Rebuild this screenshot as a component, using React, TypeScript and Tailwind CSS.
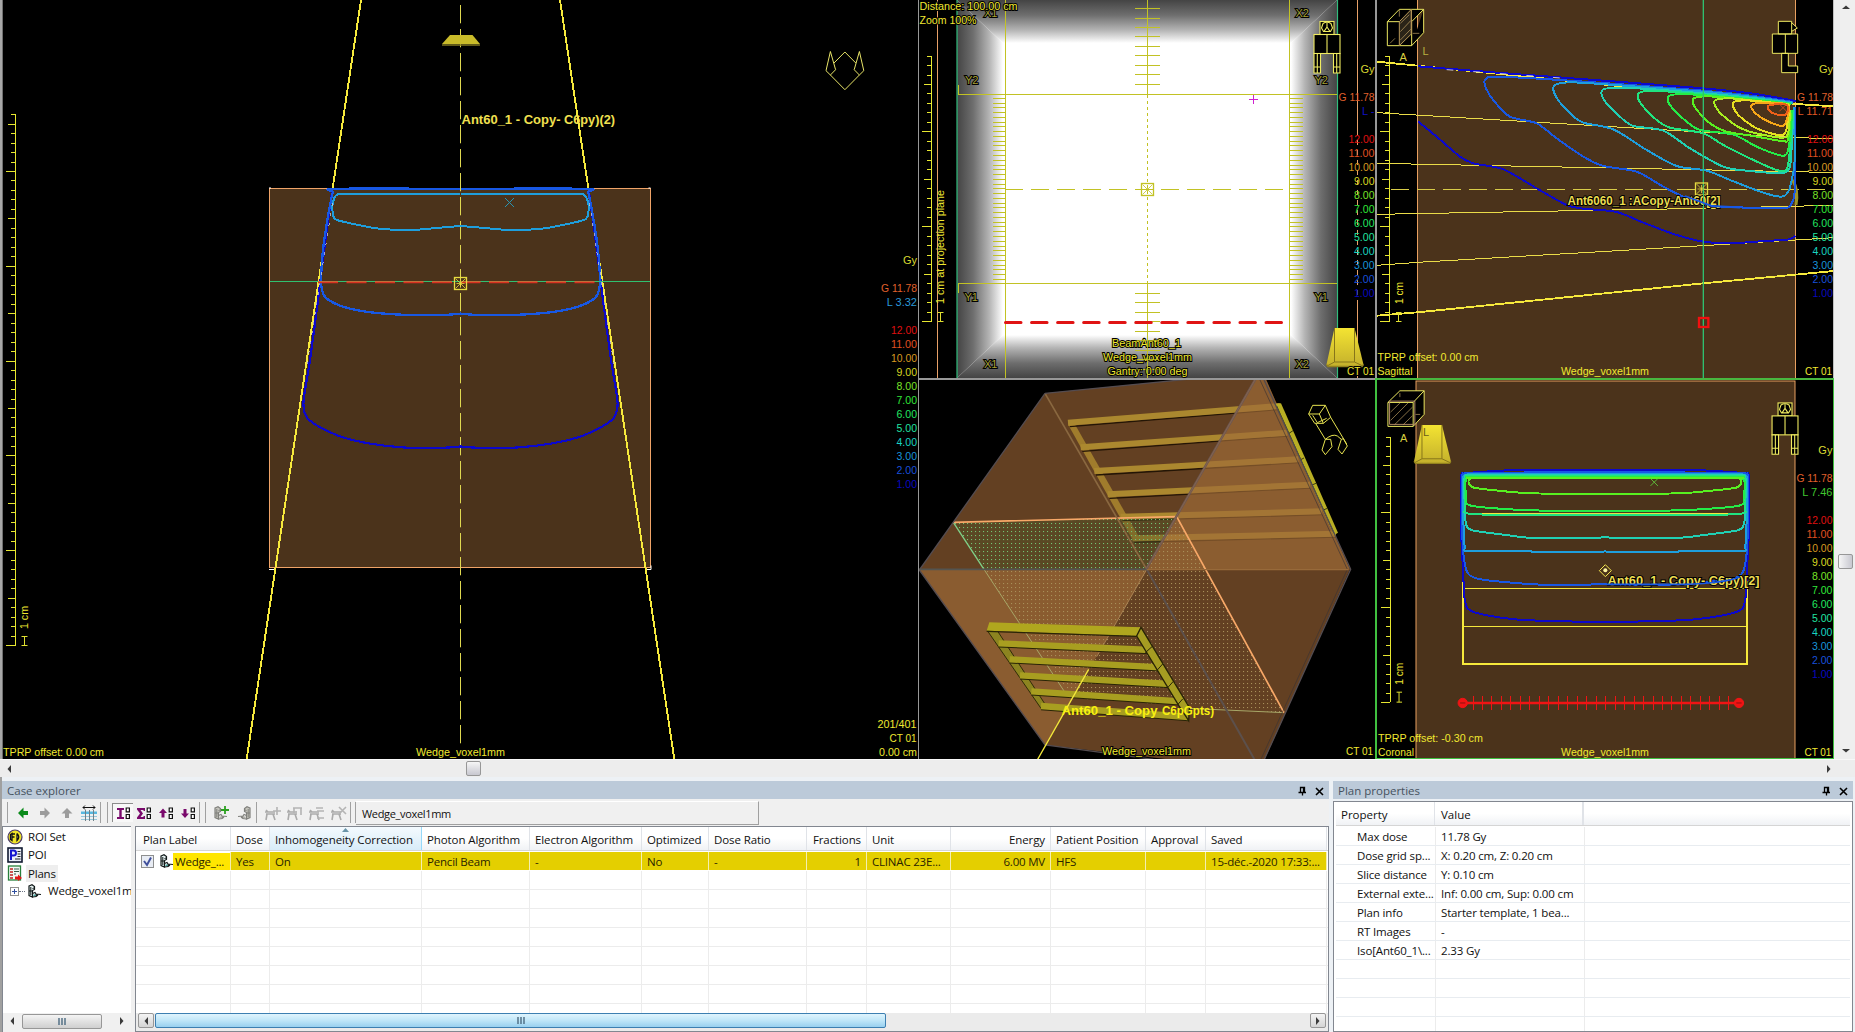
import React from "react";

type Pt = [number, number];

/* Catmull-Rom spline through the given points */
function curve(p: Pt[], close = false): string {
  const n = p.length;
  const at = (i: number): Pt => (close ? p[(i + n) % n] : p[Math.max(0, Math.min(n - 1, i))]);
  let d = `M${p[0][0]} ${p[0][1]}`;
  const segs = close ? n : n - 1;
  for (let i = 0; i < segs; i++) {
    const [a, b, c, e] = [at(i - 1), at(i), at(i + 1), at(i + 2)];
    const k = 7;
    d += `C${b[0] + (c[0] - a[0]) / k} ${b[1] + (c[1] - a[1]) / k} ${c[0] - (e[0] - b[0]) / k} ${c[1] - (e[1] - b[1]) / k} ${c[0]} ${c[1]}`;
  }
  return close ? d + "Z" : d;
}

/* Mirrors a half contour (centre last) about a vertical axis */
function mirror(p: Pt[], cx: number): Pt[] {
  return [...p, ...p.slice().reverse().map(([x, y]): Pt => [2 * cx - x, y])];
}

const DOSE = {
  1: "#0c08cc",
  2: "#1858e4",
  3: "#1e9edc",
  4: "#20d0b4",
  5: "#20e480",
  6: "#24ec48",
  7: "#58f020",
  8: "#a8f020",
  9: "#e8e020",
  10: "#f8a818",
  11: "#f06018",
} as const;

const LEGEND: [string, string][] = [
  ["12.00", "#e01010"],
  ["11.00", "#e05020"],
  ["10.00", "#d89a20"],
  ["9.00", "#d8d820"],
  ["8.00", "#78e428"],
  ["7.00", "#30e838"],
  ["6.00", "#20e860"],
  ["5.00", "#20e4a0"],
  ["4.00", "#18d4c0"],
  ["3.00", "#1894dc"],
  ["2.00", "#1850dc"],
  ["1.00", "#0808c0"],
];

function T({
  x,
  y,
  w,
  children,
  fill = "#f0e830",
  end,
  bold,
  size = 11,
  outline,
  rot,
}: {
  x: number;
  y: number;
  w?: number;
  children: string;
  fill?: string;
  end?: boolean;
  bold?: boolean;
  size?: number;
  outline?: boolean;
  rot?: boolean;
}) {
  return (
    <text
      x={x}
      y={y}
      fill={fill}
      fontSize={size}
      textLength={w}
      lengthAdjust="spacingAndGlyphs"
      textAnchor={end ? "end" : "start"}
      fontWeight={bold ? 700 : 400}
      stroke={outline ? "#000" : "none"}
      strokeWidth={outline ? 2 : 0}
      paintOrder="stroke"
      transform={rot ? `rotate(-90 ${x} ${y})` : undefined}
    >
      {children}
    </text>
  );
}

function Legend({ x, y, local, localColor }: { x: number; y: number; local: string; localColor: string }) {
  return (
    <g>
      <T x={x} y={y} end fill="#d8d830" size={11}>Gy</T>
      <T x={x} y={y + 28} end w={36} fill="#e0602c" size={11}>G 11.78</T>
      <T x={x} y={y + 42} end fill={localColor} size={11}>{local}</T>
      {LEGEND.map(([v, c], i) => (
        <T key={v} x={x} y={y + 70 + i * 14} end w={v.length === 5 ? 26 : 20.5} fill={c} size={11}>{v}</T>
      ))}
    </g>
  );
}

function Ruler({ x, bottom, count }: { x: number; bottom: number; count: number }) {
  const step = 9.48;
  let d = `M${x} ${bottom}V${bottom - step * count}`;
  for (let i = 0; i <= count; i++) {
    const len = i % 10 === 0 ? 9.5 : i % 5 === 0 ? 7.5 : 4.5;
    d += `M${x} ${Math.round(bottom - i * step) + 0.5}h${-len}`;
  }
  return <path d={d} stroke="#e8e830" fill="none" shapeRendering="crispEdges" />;
}

function UnitMark({ x, y }: { x: number; y: number }) {
  return <path d={`M${x - 2.5} ${y}.5h6M${x - 2.5} ${y + 9}.5h6M${x + 0.5} ${y}.5v9`} stroke="#e0e030" fill="none" />;
}

function IsoBox({ x, y, c = "#e8dc40" }: { x: number; y: number; c?: string }) {
  return (
    <g stroke={c} fill="none">
      <rect x={x - 6} y={y - 6} width="12" height="12" strokeWidth="1.3" />
      <path d={`M${x - 5} ${y - 5}l10 10m0 -10l-10 10M${x} ${y - 4}v8M${x - 4} ${y}h8`} strokeWidth=".8" />
    </g>
  );
}

function FrontFigure({ x, y }: { x: number; y: number }) {
  return (
    <g transform={`translate(${x} ${y})`} stroke="#f0ec60" fill="#000" strokeWidth="1.1">
      <rect x="6.5" y=".5" width="14" height="13" />
      <path d="M9.500 2.500Q13.500 0 17.500 2.500L19 7L17 10.500H10L8 7ZM13.500 2v4l-3 4.500M13.500 6l3 4.500" />
      <rect x=".5" y="13.500" width="26" height="19" />
      <path d="M13.500 13.500v19" />
      <path d="M.5 32.500h6.500v19.500h-6.500zM20 32.500h6.500v19.500h-6.500zM3.800 32.500v19.500M23.200 32.500v19.500M.5 46h6.500M20 46h6.500" />
    </g>
  );
}

function WedgeBlock({ x, y }: { x: number; y: number }) {
  return (
    <g transform={`translate(${x} ${y})`}>
      <path d="M8.500 0H28.500L37.500 36.500L36 38.500H2L.5 36.500Z" fill="url(#brass)" />
      <path d="M8.500 0V34M28.500 0V34M8.500 34H28.500M8.500 34L1 38M28.500 34L37 38" stroke="#87751a" fill="none" />
      <path d="M.5 36.500L2 38.500H36l1.500 -2" stroke="#93821e" fill="none" strokeWidth="1.3" />
    </g>
  );
}

function BrassGradient() {
  return (
    <defs>
      <linearGradient id="brass" x1="0" y1="0" x2="0" y2="1">
        <stop offset="0" stopColor="#f4e432" />
        <stop offset="1" stopColor="#c4b02c" />
      </linearGradient>
    </defs>
  );
}

const viewClass = "block size-full";
const viewFont = { fontFamily: '"Liberation Sans", Arial, sans-serif' };

function AxialView() {
  const c1: Pt[] = [[588.6, 190], [595, 235], [603, 300], [611, 360], [616, 390], [617.6, 403], [616.5, 412], [613, 419], [601.5, 427], [579, 437], [551.5, 443.5], [517, 447.5], [479, 447.8], [461, 446.5]];
  const c2: Pt[] = [[461, 188.8], [585, 188.8], [588, 192], [590, 200], [594.6, 226], [598, 250], [600, 280], [598.7, 291], [595, 298], [582.5, 305], [565, 310], [544.6, 313], [517, 314.8], [479, 315], [461, 313.7]];
  const c3: Pt[] = [[461, 193.8], [571, 193.8], [584, 195], [587, 199], [588.6, 206], [587.7, 216], [584, 220], [565, 224.5], [541, 228.8], [510, 230], [479, 227.5], [461, 226]];
  return (
    <svg viewBox="3 0 915 759" className={viewClass} style={viewFont}>
      <rect x="269.500" y="188.500" width="381" height="379" fill="#4b331b" stroke="#f0a468" />
      <path d="M269 569.500h5M646 569.500h5v-4M269 188h2M648.500 188h2" stroke="#fff" fill="none" />
      <path d="M460.500 5V745" stroke="#dfd850" strokeDasharray="18.300 5.700" />
      <g shapeRendering="crispEdges">
        <path d="M361 0L246.700 759M560 0L674.300 759" stroke="#f6e93c" strokeWidth="1.900" />
        <path d={curve(mirror(c1, 460.5))} stroke={DOSE[1]} fill="none" strokeWidth="2.200" />
        <path d={curve(mirror(c2, 460.5))} stroke={DOSE[2]} fill="none" strokeWidth="2.300" />
        <path d={curve(mirror(c3, 460.5))} stroke={DOSE[3]} fill="none" strokeWidth="2" />
        <path d="M332.500 203L307 365M589.500 203L614 365" stroke="#d8d8f0" strokeDasharray="3 7" opacity=".7" />
      </g>
      <path d="M450 35h22.500l7.500 9h-38z" fill="#c9bb2a" />
      <path d="M442 45h38" stroke="#7e7420" strokeWidth="1.600" />
      <path d="M270 281.500H650" stroke="#30c070" shapeRendering="crispEdges" />
      <path d="M318 282.500H600" stroke="#d83020" strokeWidth="1.400" strokeDasharray="20 8.500" />
      <path d="M318 281.500H600" stroke="#c07038" strokeDasharray="20 8.500" />
      <IsoBox x={460.5} y={283.500} />
      <path d="M505 198l9 9m0 -9l-9 9" stroke="#2a94b0" />
      <path
        d="M844.900 52L834 63M844.900 52L855.800 63M830.400 75L844.900 89.700L859.400 75M830.400 51.500L826 70.700L830.400 75L835.600 69.700Zm29 0L863.800 70.700L859.400 75L854.200 69.700Z"
        stroke="#e8e468"
        fill="none"
      />
      <Ruler x={15.5} bottom={645} count={56} />
      <path d="M21.500 636.500h6M21.500 645.500h6M24.500 636.500v9" stroke="#e0e030" />
      <T x={28} y={629} w={23} rot>1 cm</T>
      <T x={461.5} y={124} w={99} bold size={12.5} fill="#f0e050">Ant60_1 - Copy-</T>
      <T x={564} y={124} w={51} bold size={12.5} fill="#f0e050">C6py)(2)</T>
      <Legend x={917} y={264} local="L 3.32" localColor="#2a98d8" />
      <T x={3} y={756} w={101}>TPRP offset: 0.00 cm</T>
      <T x={416} y={756} w={89}>Wedge_voxel1mm</T>
      <T x={916.500} y={728} end w={39}>201/401</T>
      <T x={916.500} y={742} end w={27}>CT 01</T>
      <T x={917} y={756} end w={38}>0.00 cm</T>
    </svg>
  );
}

function BeamEyeView() {
  const side = Array.from({ length: 39 }, (_, i) => 98.3 + i * 4.765);
  const mid = [...Array.from({ length: 9 }, (_, i) => 84.3 - i * 9.47), ...Array.from({ length: 9 }, (_, i) => 293.3 + i * 9.47)];
  const corner: [string, number, number][] = [
    ["X1", 984, 17], ["X2", 1295.500, 17], ["Y2", 965, 84], ["Y2", 1314.5, 84],
    ["Y1", 964.500, 301], ["Y1", 1314.5, 301], ["X1", 984, 367.500], ["X2", 1295.500, 367.500],
  ];
  const g = [["0", "#444444"], [".35", "#6e6e6e"], [".7", "#b4b4b4"], ["1", "#fff"]];
  const ramp = (id: string, x1: number, y1: number, x2: number, y2: number) => (
    <linearGradient id={id} x1={x1} y1={y1} x2={x2} y2={y2}>
      {g.map(([o, c]) => <stop key={o} offset={o} stopColor={c} />)}
    </linearGradient>
  );
  return (
    <svg viewBox="919 0 456 378" className={viewClass} style={viewFont}>
      <BrassGradient />
      <defs>
        {ramp("rl", 0, 0, 1, 0)}
        {ramp("rr", 1, 0, 0, 0)}
        {ramp("rt", 0, 0, 0, 1)}
        {ramp("rb", 0, 1, 0, 0)}
      </defs>
      <rect x="957" y="0" width="380" height="378" fill="#fff" />
      <path d="M957 0L1003 43V335L957 378Z" fill="url(#rl)" />
      <path d="M1337 0L1291 43V335L1337 378Z" fill="url(#rr)" />
      <path d="M957 0H1337L1291 43H1003Z" fill="url(#rt)" />
      <path d="M957 378H1337L1291 335H1003Z" fill="url(#rb)" />
      <path d="M957 0V378M1337.500 0V378" stroke="#30bc7c" strokeWidth="1.200" />
      <path d="M937.500 0V378" stroke="#e8a068" />
      <path d="M1357.500 0V130M1357.500 300V378" stroke="#e8a068" />
      <path d="M1357.500 130V300" stroke="#e8a068" strokeDasharray="5 5" />
      <g stroke="#c2c224" fill="none" shapeRendering="crispEdges">
        <path d="M1005.500 0V378M1289.500 0V378M958.500 85V94.500H1337M958.500 293V283.500H1337M1147.500 0V94M1147.500 284V378" />
        <path d="M1147.500 95V283" strokeDasharray="3 3" />
        <path d="M1005 189.500H1288" strokeDasharray="18 8" />
        <path d={side.map((y) => `M993 ${y}h12M1290 ${y}h12.5`).join("")} />
        <path d={mid.map((y) => `M1135 ${y}h25`).join("")} />
      </g>
      <IsoBox x={1147.500} y={189.500} c="#c2c224" />
      <path d="M1005.500 322.500H1282" stroke="#e01414" strokeWidth="3" strokeLinecap="round" strokeDasharray="15.500 10.550" />
      <path d="M1249 99.500h9M1253.500 95v9" stroke="#d020d0" />
      <FrontFigure x={1313.5} y={21} />
      <WedgeBlock x={1326} y={328} />
      {corner.map(([s, x, y]) => (
        <T key={s + x + y} x={x} y={y} size={11} w={13.5} outline fill="#a8a034">{s}</T>
      ))}
      <Ruler x={931.5} bottom={321} count={28} />
      <path d="M937.500 312.500h6M937.500 321.500h6M940.500 312.500v9" stroke="#e0e030" />
      <T x={944} y={304} w={114} rot>1 cm at projection plane</T>
      <T x={919.500} y={10} w={98} outline>Distance: 100.00 cm</T>
      <T x={919.500} y={24} w={57} outline>Zoom 100%</T>
      <T x={1112} y={347} w={69} outline>BeamAnt60_1</T>
      <T x={1103} y={361} w={89} outline>Wedge_voxel1mm</T>
      <T x={1107.500} y={375} w={80} outline>Gantry: 0.00 deg</T>
      <path d="M1147.500 338V378M1137 340.500h21M1137 350.500h21M1137 359.500h21" stroke="#c2c224" strokeWidth=".8" />
      <Legend x={1374.500} y={73} local="L  -" localColor="#1010c8" />
      <T x={1374} y={375} end w={27} outline>CT 01</T>
    </svg>
  );
}

function SagittalView() {
  const contours: [string, Pt[]][] = [
    [DOSE[1], [[145, 199], [420, 221], [700, 242], [1000, 265], [1150, 281], [1277, 303]]],
    [DOSE[1], [[145, 365], [200, 410], [270, 470], [310, 490], [400, 508], [500, 565], [590, 615], [640, 626], [740, 636], [820, 668], [920, 705], [1000, 725], [1080, 730], [1200, 722], [1250, 720], [1277, 708]]],
    [DOSE[2], [[1270, 306], [1150, 288], [1000, 272], [700, 249], [540, 238], [375, 230], [345, 240], [348, 265], [372, 303], [420, 350], [500, 370], [560, 415], [640, 470], [700, 498], [800, 515], [880, 560], [960, 600], [1020, 617], [1100, 622], [1240, 624], [1264, 612], [1275, 560], [1274, 320]]],
    [DOSE[3], [[1268, 308], [1150, 291], [1000, 275], [720, 254], [600, 247], [553, 257], [558, 290], [600, 340], [640, 368], [730, 388], [830, 450], [920, 498], [1010, 512], [1080, 540], [1180, 578], [1235, 590], [1255, 575], [1265, 540], [1274, 480], [1272, 320]]],
    [DOSE[4], [[1266, 310], [1150, 294], [1000, 280], [850, 268], [750, 263], [698, 269], [702, 300], [750, 350], [790, 378], [880, 392], [960, 445], [1060, 500], [1130, 512], [1230, 519], [1257, 508], [1264, 460], [1270, 330]]],
    [DOSE[5], [[1264, 311], [1150, 297], [1000, 283], [850, 272], [806, 280], [812, 310], [860, 360], [900, 383], [1000, 400], [1060, 435], [1150, 480], [1220, 510], [1250, 508], [1260, 450], [1268, 330]]],
    [DOSE[6], [[1262, 312], [1150, 299], [1030, 288], [935, 282], [895, 290], [902, 318], [950, 365], [990, 390], [1090, 404], [1160, 440], [1230, 466], [1252, 458], [1262, 400], [1266, 330]]],
    [DOSE[7], [[1260, 312], [1150, 301], [1080, 294], [1010, 289], [970, 296], [977, 325], [1020, 370], [1070, 395], [1150, 408], [1240, 424], [1255, 415], [1263, 340]]],
    [DOSE[8], [[1260, 314], [1150, 302], [1080, 295], [1034, 302], [1047, 335], [1100, 378], [1150, 398], [1235, 413], [1254, 400], [1261, 330]]],
    [DOSE[9], [[1256, 314], [1180, 305], [1120, 301], [1088, 310], [1105, 345], [1160, 385], [1225, 405], [1247, 395], [1257, 335], [1256, 314]]],
    [DOSE[10], [[1240, 309], [1170, 308], [1143, 318], [1160, 343], [1200, 367], [1240, 377], [1253, 350], [1257, 322], [1240, 309]]],
    [DOSE[11], [[1245, 313], [1215, 313], [1193, 320], [1205, 338], [1240, 346], [1254, 332], [1252, 317], [1245, 313]]],
  ];
  return (
    <svg viewBox="1377 0 456 378" className={viewClass} style={viewFont}>
      <rect x="1417.500" y="-1" width="378" height="380" fill="#4b331b" stroke="#e8a060" />
      <g transform="translate(1370 0) scale(.33333)" fill="none" strokeWidth="3">
        <g stroke="#f6e93c" shapeRendering="crispEdges">
          <path d="M21 185L143 197L1277 312L1392 319M21 947L143 937L1000 850L1392 813" strokeWidth="5.500" />
          <path d="M21 338L1277 413L1392 416M21 490L1277 515L1392 518M21 643L1000 625L1392 616M21 796L143 787L1000 737L1277 720L1392 713" stroke="#eadc48" strokeWidth="3" />
          <path d="M64 568H1392" strokeDasharray="54 24" stroke="#d8cc48" />
        </g>
        <path d="M1268 540q18 30 10 75" stroke="#9a9428" strokeWidth="9" />
        <g shapeRendering="crispEdges">
          {contours.map(([c, p], i) => <path key={i} d={curve(p)} stroke={c} strokeWidth="6" />)}
        </g>
        <path d="M230 209L600 236" stroke="#e8e8f0" strokeDasharray="20 60" strokeWidth="2.500" />
        <path d="M1000 0V1134" stroke="#30c070" strokeWidth="4" />
        <path d="M1228 312l22 22m0 -22l-22 22" stroke="#c85020" />
        <rect x="987" y="954" width="28" height="27" stroke="#f01010" strokeWidth="7" />
        <g stroke="#ece860">
          <path d="M52 65H125V137H52ZM52 65L88 28H161L125 65M161 28V98L125 137" fill="#000" />
          <path d="M88 65L124 28V100M124 28V102L88 137V65" stroke="#b89858" fill="#2a2418" />
          <path d="M91 95L122 62M91 120L122 88M91 70L118 44M60 130l15 -15M128 100h20M88 30v20" stroke="#c8a868" strokeWidth="2" />
          <path d="M1225 64h40v38h-40zM1265 68l17 16l-17 10M1207 102h76v58h-76zM1246 102v58M1235 160h20v38h28v20h-48z" fill="#000" />
        </g>
      </g>
      <IsoBox x={1701.500} y={189} />
      <T x={1399.500} y={61} fill="#d8d040">A</T>
      <T x={1422.500} y={54.500} fill="#b8b040">L</T>
      <Ruler x={1389.5} bottom={321} count={28} />
      <path d="M1396 312.500h5.500M1396 321.500h5.500M1398.500 312.500v9" stroke="#e0e030" />
      <T x={1402.500} y={304} w={22} rot>1 cm</T>
      <T x={1567.500} y={204.500} w={153} size={12.5} bold outline fill="#ecdc50">Ant6060_1 :ACopy-Ant60[2]</T>
      <path d="M1703.500 190V215" stroke="#30c070" />
      <path d="M1685 196L1712 206L1740 207.500" stroke={DOSE[2]} fill="none" strokeWidth="1.800" />
      <T x={1377.500} y={361} w={101}>TPRP offset: 0.00 cm</T>
      <T x={1377.500} y={375} w={35}>Sagittal</T>
      <T x={1561} y={375} w={88}>Wedge_voxel1mm</T>
      <T x={1832} y={375} end w={27}>CT 01</T>
      <Legend x={1833} y={73} local="L 11.71" localColor="#e05824" />
    </svg>
  );
}

function CoronalView() {
  const m = (p: Pt[]) => mirror(p, 705);
  const contours: [string, Pt[]][] = [
    [DOSE[1], [[705, 299], [955, 299], [1080, 305], [1125, 310], [1138, 322], [1138, 480], [1132, 600], [1128, 680], [1118, 716], [1080, 732], [980, 748], [860, 754], [705, 756]]],
    [DOSE[2], [[705, 305], [1090, 308], [1126, 312], [1135, 325], [1134, 500], [1128, 575], [1116, 612], [1080, 628], [950, 641], [860, 645], [705, 643]]],
    [DOSE[3], [[705, 310], [1090, 312], [1124, 316], [1132, 328], [1131, 450], [1127, 530], [1118, 543], [1000, 543], [930, 543], [910, 546], [745, 546], [705, 544]]],
    [DOSE[4], [[705, 313], [1090, 315], [1122, 318], [1129, 330], [1127, 400], [1124, 455], [1106, 480], [1000, 495], [930, 503], [750, 504], [705, 501]]],
    [DOSE[5], [[705, 316], [1090, 317], [1118, 320], [1127, 332], [1126, 410], [1118, 430], [1000, 435], [860, 435], [705, 435]]],
    [DOSE[6], [[705, 319], [1090, 320], [1116, 322], [1125, 335], [1122, 385], [1110, 406], [1000, 417], [860, 422], [705, 422]]],
    [DOSE[7], [[705, 324], [1090, 324], [1110, 326], [1115, 338], [1100, 352], [1040, 360], [940, 369], [860, 370], [705, 370]]],
  ];
  const ticks = Array.from({ length: 28 }, (_, i) => `M${308 + i * 28.5} 980v42`).join("");
  return (
    <svg viewBox="1377 379.500 456 379.500" className={viewClass} style={viewFont}>
      <BrassGradient />
      <rect x="1415.500" y="380.500" width="380" height="385" fill="#4b331b" stroke="#e8a060" />
      <g transform="translate(1370 370) scale(.33333)" fill="none" strokeWidth="3">
        <g stroke="#f6e93c" shapeRendering="crispEdges">
          <path d="M279 310V883H1132V310" strokeWidth="5.500" />
          <path d="M279 430H1132M279 543H1132M279 655H1132M279 769H1132" strokeWidth="3" />
        </g>
        <g shapeRendering="crispEdges">
          {contours.map(([c, p], i) => <path key={i} d={curve(m(p), true)} stroke={c} strokeWidth="6" />)}
        </g>
        <path d="M415 430H1000" stroke="#e8e448" />
        <path d="M842 325l22 22m0 -22l-22 22" stroke="#60b838" />
        <path d="M706 584L724 602L706 620L688 602Z" stroke="#f4e850" />
        <circle cx="706" cy="601" r="6" fill="#fff8a0" />
        <g stroke="#f01414">
          <path d="M278 1000H1108" strokeWidth="7" />
          <path d={ticks} shapeRendering="crispEdges" />
          <circle cx="277" cy="1000" r="14" fill="#f01414" />
          <circle cx="1108" cy="1000" r="14" fill="#f01414" />
          <path d="M269 1000h16M1100 1000h16" stroke="#901010" />
        </g>
        <g stroke="#ece860">
          <path d="M52 96L88 61H161V132L128 168M52 96H128V168H52ZM128 96L161 61" fill="#000" />
          <path d="M57 92h76v70h-76z" stroke="#b08868" />
          <path d="M60 150L112 98M60 125L88 98M72 163L126 110M98 163L126 136M88 68v12M135 132h14" stroke="#c8a868" strokeWidth="2" />
        </g>
      </g>
      <WedgeBlock x={1413} y={424.500} />
      <FrontFigure x={1772} y={402} />
      <T x={1399.500} y={442} fill="#d8d040">A</T>
      <T x={1422.500} y={436} fill="#6c5c18">L</T>
      <Ruler x={1389.5} bottom={702} count={28} />
      <path d="M1396 692.500h5.500M1396 702.500h5.500M1398.500 692.500v10" stroke="#e0e030" />
      <T x={1402.500} y={685} w={22} rot>1 cm</T>
      <T x={1607.500} y={585} w={98} size={12.5} bold outline fill="#ecdc50">Ant60_1 - Copy-</T>
      <T x={1709} y={585} w={51} size={12.5} bold outline fill="#ecdc50">C6py)[2]</T>
      <path d="M1606 584.500H1685Q1725 583 1740 577" stroke={DOSE[2]} fill="none" strokeWidth="1.800" />
      <T x={1377.500} y={742} w={105}>TPRP offset: -0.30 cm</T>
      <T x={1377.500} y={756} w={36}>Coronal</T>
      <T x={1561} y={756} w={88}>Wedge_voxel1mm</T>
      <T x={1832} y={756} end w={27}>CT 01</T>
      <Legend x={1833} y={454} local="L 7.46" localColor="#40c830" />
    </svg>
  );
}

function VolumeView() {
  const upper: [Pt, Pt][] = [
    [[474, 158], [1110, 108]],
    [[512, 232], [1132, 188]],
    [[553, 303], [1165, 268]],
    [[593, 373], [1200, 344]],
    [[632, 440], [1236, 424]],
    [[668, 505], [1278, 491]],
  ];
  const lower: [Pt, Pt][] = [
    [[266, 820], [722, 840]],
    [[299, 868], [752, 892]],
    [[330, 916], [782, 942]],
    [[364, 964], [812, 994]],
    [[393, 1008], [836, 1041]],
  ];
  return (
    <svg viewBox="919 380 456 379" className={viewClass} style={viewFont}>
      <defs>
        <pattern id="dotsGreen" width="12" height="12" patternUnits="userSpaceOnUse">
          <rect x="3" y="3" width="3.200" height="3.200" fill="#74c474" />
        </pattern>
        <pattern id="dotsTan" width="12" height="12" patternUnits="userSpaceOnUse">
          <rect x="3" y="3" width="3.200" height="3.200" fill="#a8905a" />
        </pattern>
      </defs>
      <g transform="translate(910 370) scale(.33333)" fill="none" strokeWidth="3">
        <path d="M405 70L830 28L1060 10L1320 598L1050 1200L405 1125L28 600Z" fill="#634022" />
        <path d="M475 165L496 165L692 510H668Z" fill="#a07c2c" />
        {upper.map(([a, b], i) => (
          <g key={i}>
            <path d={`M${a[0] + 5} ${a[1] + 12}L${b[0]} ${b[1] + 10}`} stroke="#231505" strokeWidth="4" />
            <path d={`M${a[0]} ${a[1]}L${b[0]} ${b[1]}`} stroke="#ab882f" strokeWidth="18" />
          </g>
        ))}
        <path d="M1043 10H1060L1320 598H710Z" fill="#a06c38" fillOpacity=".66" />
        <path d="M1095 102L1113 100L1284 488L1272 496Z" fill="#b8ae24" />
        <path d="M1100 108L1272 490" stroke="#3c3810" />
        <path d="M1137 190l12 -8M1170 270l12 -6M1206 345l12 -5M1240 420l12 -5" stroke="#3c3810" />
        <path d="M28 600H710L405 1125Z" fill="#8a5c30" />
        <path d="M130 457L800 440L710 598H222Z" fill="#4e5428" fillOpacity=".4" />
        <path d="M130 457L800 440L710 598H222Z" fill="url(#dotsGreen)" />
        <path d="M222 598H710L800 440L1122 1028L490 985Z" fill="url(#dotsTan)" />
        <path d="M130 457L222 598" stroke="#80d088" strokeWidth="4" />
        <path d="M222 598L470 975M835 1015L1122 1028" stroke="#a8a868" strokeWidth="3" />
        <path d="M130 457L800 440L1122 1028" stroke="#f8a868" strokeWidth="5" />
        <path d="M405 70L710 598" stroke="#8a6840" strokeWidth="5" />
        <path d="M710 598L560 860" stroke="#a88050" strokeWidth="3" />
        <path d="M405 70L830 28M405 70L28 600L405 1125L730 1168M1060 25L1322 598L1062 1170" stroke="#544c50" strokeWidth="4" />
        <path d="M1050 30L1312 598L1052 1170" stroke="#3c3434" strokeWidth="2" />
        <path d="M1036 28L708 598" stroke="#6a5654" strokeWidth="7" />
        <path d="M1036 28L708 598" stroke="#8c6648" strokeWidth="2.500" />
        <path d="M710 598L1040 1180" stroke="#5c504c" strokeWidth="6" />
        <path d="M28 598H710" stroke="#545450" strokeWidth="5" />
        <path d="M710 599H1316" stroke="#986a3a" strokeWidth="4" />
        <path d="M232 782L262 782L410 1010L395 1018Z" fill="#8c8420" stroke="#302c08" />
        {lower.map(([a, b], i) => (
          <g key={i}>
            <path d={`M${a[0]} ${a[1] + 10}L${b[0]} ${b[1] + 10}`} stroke="#282406" strokeWidth="5" />
            <path d={`M${a[0]} ${a[1]}L${b[0]} ${b[1]}`} stroke="#a89e20" strokeWidth="19" />
          </g>
        ))}
        <path d="M238 757L692 772L680 798L230 782Z" fill="#b0a61e" />
        <path d="M230 784L680 799" stroke="#282406" strokeWidth="4" />
        <path d="M693 772L680 798L806 1006L836 1052L838 1012Z" fill="#a69c22" stroke="#282406" strokeWidth="4" />
        <path d="M706 848l20 -18M742 900l16 -18M774 952l16 -18M804 1003l14 -16" stroke="#282406" />
        <path d="M536 898L383 1168" stroke="#f4e83c" strokeWidth="4" />
        <g stroke="#e8e450" strokeWidth="3">
          <path d="M1208 106H1246L1262 142L1240 160H1214L1196 132ZM1196 132L1228 132L1246 106M1228 132L1240 160M1208 136L1222 158L1250 145" />
          <path d="M1262 142L1310 222M1218 162L1246 208M1246 208Q1268 190 1282 198L1294 208M1246 208L1236 240L1246 254L1266 230L1262 208ZM1294 208L1284 238L1296 252L1312 228L1300 206Z" />
        </g>
      </g>
      <T x={1061.500} y={715} w={96} size={12.5} bold fill="#f8f010">Ant60_1 - Copy</T>
      <T x={1162} y={715} w={52} size={12.5} bold fill="#f8f010">C6pGpts)</T>
      <T x={1102} y={755} w={89} outline>Wedge_voxel1mm</T>
      <T x={1373} y={755} end w={27}>CT 01</T>
    </svg>
  );
}

/* ---------- window chrome ---------- */

function Arrow({ dir }: { dir: "left" | "right" | "up" | "down" }) {
  const d = { left: "M6 0L2.500 4L6 8Z", right: "M2 0L5.500 4L2 8Z", up: "M0 6L4 2.500L8 6Z", down: "M0 2L4 5.500L8 2Z" }[dir];
  return (
    <svg width="8" height="8" className="shrink-0">
      <path d={d} fill="#3a3a3a" />
    </svg>
  );
}

function Grip() {
  return (
    <svg width="8" height="7">
      <path d="M1 0v7M4 0v7M7 0v7" stroke="#4a6a80" strokeWidth="1.400" />
    </svg>
  );
}

function PaneTitle({ children }: { children: string }) {
  return (
    <div className="flex h-[18px] shrink-0 items-center bg-[#bccad9] pt-[2px] pr-[5px] pl-[5px] text-[#46525e]">
      <span className="flex-1">{children}</span>
      <svg width="9" height="10" className="mr-[8px]">
        <path d="M2.500 6V1.500H6.500V6M5.500 1.500V6M.5 6.500H8M4.500 6.500V9.500" stroke="#000" fill="none" strokeWidth="1.300" />
      </svg>
      <svg width="9" height="9">
        <path d="M1 1L8 8M8 1L1 8" stroke="#000" strokeWidth="1.600" />
      </svg>
    </div>
  );
}

function Bar() {
  return <span className="h-[21px] w-px shrink-0 bg-[#a0a0a0]" />;
}

function Cell({ w, children, on }: { w: number; children: React.ReactNode; on?: boolean }) {
  return (
    <span
      className={
        "flex h-[19px] shrink-0 items-center justify-center pt-px " +
        (on ? "border-t border-l border-[#8c8c8c] bg-[#f8f8f8]" : "")
      }
      style={{ width: w }}
    >
      {children}
    </span>
  );
}

function MoveArrow({ c, deg }: { c: string; deg: number }) {
  return (
    <svg width="12" height="12" viewBox="0 0 12 12">
      <path d="M1 6L6.500 .5V4H11V8H6.500V11.500Z" fill={c} transform={`rotate(${deg} 6 6)`} />
    </svg>
  );
}

function LevelIcon({ d }: { d: string }) {
  return (
    <svg width="15" height="13" viewBox="0 0 15 13">
      <path d={d} fill="#7a0a6c" />
      <path d="M10.200 1h3.200v3.800h-3.200zM10.200 7.500h3.200v4h-3.200z" stroke="#111" fill="#fff" strokeWidth="1.200" />
    </svg>
  );
}

function Gantry({ grey, plus }: { grey?: boolean; plus?: boolean }) {
  const ink = grey ? "#80807c" : "#101818";
  return (
    <svg width="16" height="15" viewBox="0 0 16 15">
      <path d="M2 2L5 .8L7.500 2.500V5.500L5.500 6.500V13L2 11.500Z" fill={grey ? "#c4c4bc" : "#e4f0f0"} stroke={ink} strokeWidth="1.200" />
      <path d="M3.800 3v8M5.500 4.500l1.500 -.5M2 7h3" stroke={ink} />
      <path d="M5.500 9.500L8 8.500L9 10L14 10.500M5.500 13L9 12.500L9 10M9 12.500L11 11" fill="none" stroke={ink} strokeWidth="1.200" />
      <path d="M6.500 10.500h2v1.500h-2z" fill={grey ? "#b0b0a8" : "#38a8a0"} />
      {plus && <path d="M12 0v8M8 4h8" stroke="#2ca020" strokeWidth="1.800" />}
    </svg>
  );
}

function TableBeam({ mark }: { mark: string }) {
  return (
    <svg width="18" height="15" viewBox="0 0 18 15">
      <path d="M1 6H11M2 8H11M3 8L2 14M9 8L11 14M2 4l2 2" stroke="#aaa" strokeWidth="1.600" fill="none" />
      <path d={mark} stroke="#b4b4b4" strokeWidth="1.600" fill="none" />
    </svg>
  );
}

const treeItems = ["ROI Set", "POI", "Plans", "Wedge_voxel1m"];

const columns: { name: string; w: number; v: string; right?: boolean }[] = [
  { name: "Plan Label", w: 95, v: "Wedge_..." },
  { name: "Dose", w: 39, v: "Yes" },
  { name: "Inhomogeneity Correction", w: 152, v: "On" },
  { name: "Photon Algorithm", w: 108, v: "Pencil Beam" },
  { name: "Electron Algorithm", w: 112, v: "-" },
  { name: "Optimized", w: 67, v: "No" },
  { name: "Dose Ratio", w: 98, v: "-" },
  { name: "Fractions", w: 60, v: "1", right: true },
  { name: "Unit", w: 84, v: "CLINAC 23E..." },
  { name: "Energy", w: 100, v: "6.00 MV", right: true },
  { name: "Patient Position", w: 95, v: "HFS" },
  { name: "Approval", w: 60, v: "" },
  { name: "Saved", w: 121, v: "15-déc.-2020 17:33:..." },
];

const properties: [string, string][] = [
  ["Max dose", "11.78 Gy"],
  ["Dose grid sp...", "X: 0.20 cm, Z: 0.20 cm"],
  ["Slice distance", "Y: 0.10 cm"],
  ["External exte...", "Inf: 0.00 cm, Sup: 0.00 cm"],
  ["Plan info", "Starter template, 1 bea..."],
  ["RT Images", "-"],
  ["Iso[Ant60_1\\...", "2.33 Gy"],
  ["", ""],
  ["", ""],
  ["", ""],
  ["", ""],
];

function TreeIcon({ i }: { i: number }) {
  if (i === 0)
    return (
      <svg width="16" height="16">
        <circle cx="8" cy="8" r="7" fill="#f0e428" stroke="#4a3a6a" strokeWidth="1.200" />
        <path d="M5 4.500v7l-1.500 -1v-5zM5.500 5h2.500M5.500 8h2M10 4.500v7q3.500 -3.500 0 -7" stroke="#111" fill="#f8f8e0" strokeWidth="1.300" />
      </svg>
    );
  if (i === 1)
    return (
      <svg width="16" height="16">
        <rect x="1" y="1" width="14" height="14" fill="#e8ecf8" stroke="#111a30" strokeWidth="1.600" />
        <path d="M4 13V3.500h2.500q2.500 0 2.500 2.500t-2.500 2.500H4" stroke="#1414d0" fill="none" strokeWidth="2" />
        <path d="M10.500 4.500h3M10.500 7h3M10.500 9.500h3M8 12h5.500" stroke="#222" />
      </svg>
    );
  if (i === 2)
    return (
      <svg width="16" height="16">
        <rect x="1.500" y="1" width="12" height="14" fill="#f4f8f4" stroke="#28803c" strokeWidth="1.300" />
        <path d="M3 4h3M3 7h3M3 10h3M3 13h3" stroke="#c02020" strokeWidth="1.300" />
        <path d="M7 4h5M7 6.500h5M7 9h2" stroke="#385848" strokeWidth="1.200" />
        <path d="M8 11.500h3V9.500l4 3.500L11 16v-1.500H8z" fill="#e41818" />
      </svg>
    );
  return <Gantry />;
}

function CaseExplorer() {
  return (
    <section className="flex w-[1327px] flex-col">
      <PaneTitle>Case explorer</PaneTitle>
      <div className="flex h-[27px] shrink-0 items-center bg-[#f0f0f0] pl-[5px]">
        <Bar />
        <Cell w={4}>{null}</Cell>
        <Cell w={22}><MoveArrow c="#0a8a1a" deg={0} /></Cell>
        <Cell w={22}><MoveArrow c="#9c9c9c" deg={180} /></Cell>
        <Cell w={22}><MoveArrow c="#9c9c9c" deg={90} /></Cell>
        <Cell w={22}>
          <svg width="16" height="16">
            <path d="M2 2.500h12M4 .5L2 2.500l2 2M12 .5l2 2l-2 2" stroke="#111" fill="none" />
            <path d="M0 6.500h16v2.500h-16z" fill="#58b8e0" />
            <path d="M0 11.500h16M0 14.500h16" stroke="#98c8dc" />
            <path d="M4.500 5v11M8.500 5v11M12.500 5v11" stroke="#708088" />
          </svg>
        </Cell>
        <Bar />
        <Cell w={6}>{null}</Cell>
        <Bar />
        <Cell w={4}>{null}</Cell>
        <Cell w={21} on><LevelIcon d="M1 1h7v2h-2.300v7H8v2H1v-2h2.300V3H1z" /></Cell>
        <Cell w={22}><LevelIcon d="M0 1h8v3H6.500V3H3.500L6 6.500L3.500 10H6.500V9H8v3H0v-1.500L3 6.500L0 2.500z" /></Cell>
        <Cell w={23}><LevelIcon d="M4 1.500L8 6H5.500v4.500h-3V6H0z" /></Cell>
        <Cell w={21}><LevelIcon d="M4 11L8 6.500H5.500V2h-3v4.500H0z" /></Cell>
        <Bar />
        <Cell w={5}>{null}</Cell>
        <Bar />
        <Cell w={4}>{null}</Cell>
        <Cell w={22}><Gantry grey plus /></Cell>
        <Cell w={24}><span className="-scale-x-100"><Gantry grey /></span></Cell>
        <Bar />
        <Cell w={5}>{null}</Cell>
        <Cell w={22}><TableBeam mark="M13 1v8M9 5h8" /></Cell>
        <Cell w={22}><TableBeam mark="M7 2h9M8 2v5M15 2v7" /></Cell>
        <Cell w={22}><TableBeam mark="M8 2h7M9 5h7M9 12h7" /></Cell>
        <Cell w={22}><TableBeam mark="M9 1l7 7M16 1l-7 7" /></Cell>
        <Bar />
        <Cell w={4}>{null}</Cell>
        <Bar />
        <div className="flex h-[24px] w-[403px] items-center border-t border-r border-b border-[#a0a0a0] border-t-white pt-[2px] pl-[6px] text-[11px] tracking-[-0.33px]">
          Wedge_voxel1mm
        </div>
      </div>
      <div className="flex min-h-0 flex-1">
        <div className="flex w-[129px] flex-col border-t border-l border-[#828790] bg-white">
          <div className="flex-1 overflow-hidden pt-[1px]">
            {treeItems.map((t, i) => (
              <div key={t} className={"flex h-[18px] items-center overflow-hidden whitespace-nowrap tracking-[-0.2px] " + (i === 3 ? "pl-[7px]" : "pl-[4px]")}>
                {i === 3 && (
                  <>
                    <svg width="9" height="9" className="shrink-0">
                      <rect x=".5" y=".5" width="8" height="8" fill="#fff" stroke="#909090" />
                      <path d="M2 4.500h5M4.500 2v5" stroke="#3050a0" />
                    </svg>
                    <span className="mr-[2px] w-[6px] shrink-0 border-t border-dotted border-gray-500" />
                  </>
                )}
                <span className="shrink-0"><TreeIcon i={i} /></span>
                <span className={i === 2 ? "ml-[3px] bg-[#eeeeee] px-[2px] leading-[17px]" : "ml-[5px]"}>{t}</span>
              </div>
            ))}
          </div>
          <div className="flex h-[19px] items-center bg-[#f0f0f0] px-[5px] pb-[3px]">
            <Arrow dir="left" />
            <div className="mx-[6px] flex h-[15px] w-[80px] items-center justify-center rounded-[2px] border border-[#979797] bg-gradient-to-b from-[#f4f4f4] to-[#cfcfcf]">
              <Grip />
            </div>
            <span className="flex-1" />
            <Arrow dir="right" />
          </div>
        </div>
        <div className="w-[4px] bg-[#f0f0f0]" />
        <div className="flex min-w-0 flex-1 flex-col overflow-hidden border border-[#828790] bg-white">
          <div className="flex h-[24px] shrink-0 border-b border-[#d5d5d5]">
            {columns.map((c, i) => (
              <div
                key={c.name}
                className={
                  "relative flex shrink-0 items-center border-r pt-[2px] whitespace-nowrap tracking-[-0.1px] " +
                  (c.right ? "justify-end pr-[5px] " : i === 0 ? "pl-[7px] " : "pl-[5px] ") +
                  (i === 2
                    ? "border-[#96d9f9] bg-gradient-to-b from-[#f4fafe] to-[#d8ecf8]"
                    : "border-[#e0e3e8] bg-gradient-to-b from-white via-white to-[#f0f2f5]")
                }
                style={{ width: c.w }}
              >
                {c.name}
                {i === 2 && (
                  <svg width="7" height="4" className="absolute top-[1px] left-[72px]">
                    <path d="M0 4L3.500 0L7 4Z" fill="#6a94a8" />
                  </svg>
                )}
              </div>
            ))}
          </div>
          <div className="mt-px flex h-[18px] shrink-0">
            {columns.map((c, i) => (
              <div
                key={c.name}
                className={
                  "flex shrink-0 items-center border-r border-[#f4eeb0] pt-px whitespace-nowrap tracking-[-0.2px] text-[#2a2400] " +
                  (c.right ? "justify-end pr-[5px] " : i === 0 ? "" : "pl-[5px] ") +
                  (i === 0 ? "bg-white" : "bg-[#e4cf00]")
                }
                style={{ width: c.w }}
              >
                {i === 0 ? (
                  <>
                    <svg width="13" height="13" className="mx-[5px] shrink-0">
                      <rect x=".5" y=".5" width="12" height="12" fill="#e8ecf4" stroke="#8e8f8f" />
                      <path d="M3 6L6 10L10 2.500" stroke="#40509c" fill="none" strokeWidth="2" />
                    </svg>
                    <span className="w-[14px] shrink-0 overflow-hidden"><Gantry /></span>
                    <span className="flex h-full flex-1 items-center bg-[#ffe600] pl-[2px]">{c.v}</span>
                  </>
                ) : (
                  c.v
                )}
              </div>
            ))}
          </div>
          <div className="mt-px flex min-h-0 flex-1 flex-col overflow-hidden">
            {Array.from({ length: 8 }, (_, r) => (
              <div key={r} className="flex h-[19px] shrink-0 border-b border-[#ececec]">
                {columns.map((c) => (
                  <div key={c.name} className="shrink-0 border-r border-[#ececec]" style={{ width: c.w }} />
                ))}
              </div>
            ))}
          </div>
          <div className="flex h-[18px] shrink-0 items-center bg-[#ebebeb] px-[2px] pb-[3px]">
            <div className="flex h-[15px] w-[16px] items-center justify-center rounded-[2px] border border-[#979797] bg-gradient-to-b from-[#f4f4f4] to-[#d4d4d4]">
              <Arrow dir="left" />
            </div>
            <div className="ml-[1px] flex h-[15px] w-[731px] items-center justify-center rounded-[2px] border border-[#3c7fb1] bg-gradient-to-b from-[#dff4fd] via-[#bfe6f8] to-[#98d0ef]">
              <Grip />
            </div>
            <span className="flex-1" />
            <div className="flex h-[15px] w-[16px] items-center justify-center rounded-[2px] border border-[#979797] bg-gradient-to-b from-[#f4f4f4] to-[#d4d4d4]">
              <Arrow dir="right" />
            </div>
          </div>
        </div>
      </div>
    </section>
  );
}

function PlanProperties() {
  return (
    <section className="flex w-[520px] flex-col">
      <PaneTitle>Plan properties</PaneTitle>
      <div className="mt-[2px] flex min-h-0 flex-1 flex-col overflow-hidden border border-[#828790] bg-white px-[2px]">
        <div className="mb-px flex h-[24px] shrink-0 items-center border-b border-[#d5d5d5] bg-gradient-to-b from-white via-white to-[#f0f2f5]">
          <span className="flex h-full w-[99px] items-center border-r border-[#e0e3e8] pt-[2px] pl-[5px]">Property</span>
          <span className="flex h-full w-[149px] items-center border-r-2 border-[#e0e3e8] pt-[2px] pl-[6px]">Value</span>
        </div>
        {properties.map(([k, v], i) => (
          <div key={i} className="flex h-[19px] shrink-0 border-b border-[#e8ecf0] whitespace-nowrap tracking-[-0.15px]">
            <span className="flex w-[100px] items-center border-r border-[#ececec] pt-[2px] pl-[21px]">{k}</span>
            <span className="flex w-[149px] items-center border-r border-[#ececec] pt-[2px] pl-[5px]">{v}</span>
          </div>
        ))}
      </div>
    </section>
  );
}

export default function App() {
  return (
    <div className="flex h-[1032px] w-[1855px] flex-col overflow-hidden bg-[#edf1f5] font-['Open_Sans','Noto_Sans',sans-serif] text-[11.500px] leading-[16px] text-[#101010]">
      <div className="flex h-[759px] shrink-0">
        <div className="w-[3px] border-r border-[#707070] bg-[#a8a8a8]" />
        <div className="w-[915px] bg-black"><AxialView /></div>
        <div className="w-[1px] bg-[#989898]" />
        <div className="flex w-[456px] flex-col bg-black">
          <div className="h-[378px]"><BeamEyeView /></div>
          <div className="h-[2px] bg-[#989898]" />
          <div className="h-[379px]"><VolumeView /></div>
        </div>
        <div className="flex w-[2px] flex-col">
          <div className="h-[378px] bg-[#989898]" />
          <div className="flex-1 bg-[#40c040]" />
        </div>
        <div className="flex w-[456px] flex-col bg-black">
          <div className="h-[378px]"><SagittalView /></div>
          <div className="h-[1.500px] bg-[#48b840]" />
          <div className="min-h-0 flex-1 border-b border-[#40c040]"><CoronalView /></div>
        </div>
        <div className="flex w-px flex-col">
          <div className="h-[378px] bg-[#c0c0c0]" />
          <div className="flex-1 bg-[#40c040]" />
        </div>
        <div className="flex flex-1 flex-col items-center bg-[#efefef] pt-[3px] pb-[4px] pl-[2px]">
          <Arrow dir="up" />
          <div className="mt-[543px] h-[15px] w-[15px] rounded-[2px] border border-[#979797] bg-gradient-to-r from-[#f6f6f6] to-[#c8c8d0]" />
          <span className="flex-1" />
          <Arrow dir="down" />
        </div>
      </div>
      <div className="flex h-[18px] shrink-0 items-center border-t border-[#f8f8f8] bg-[#ededed] pr-[22px] pl-[5px]">
        <Arrow dir="left" />
        <div className="ml-[453px] h-[15px] w-[15px] rounded-[2px] border border-[#979797] bg-gradient-to-b from-[#f6f6f6] to-[#c8c8d0]" />
        <span className="flex-1" />
        <Arrow dir="right" />
      </div>
      <div className="flex min-h-0 flex-1 gap-[4px] border-l-2 border-[#a0a0a0] pt-[4px]">
        <CaseExplorer />
        <PlanProperties />
      </div>
    </div>
  );
}
